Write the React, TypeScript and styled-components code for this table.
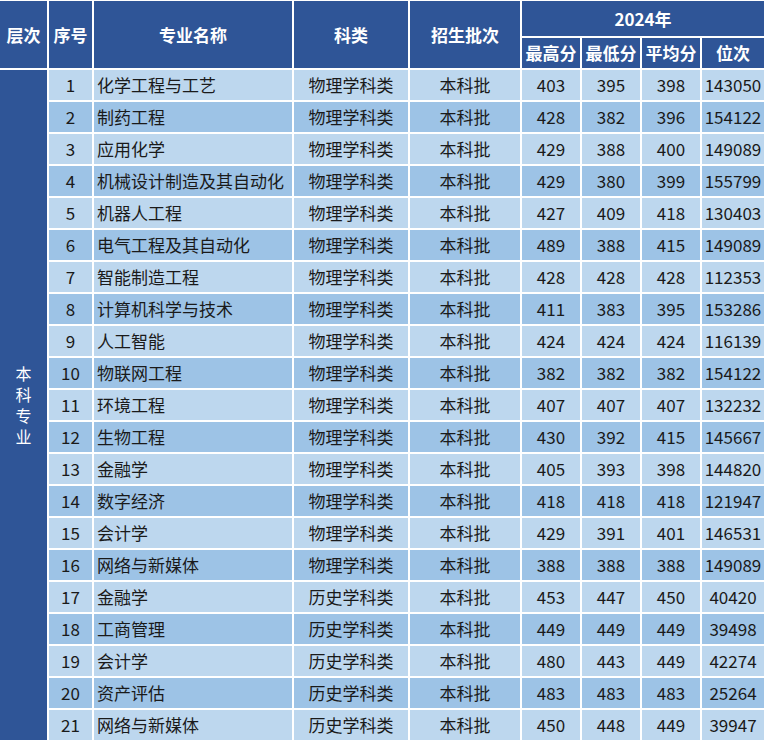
import React from "react";
import styled, { createGlobalStyle } from "styled-components";

const Global = createGlobalStyle`
  html, body { margin: 0; padding: 0; background: #ffffff; }
  body { font-family: "Noto Sans CJK SC", "Noto Sans", sans-serif; }
`;

const Table = styled.div`
  display: grid;
  grid-template-columns: 47px 43px 198px 114px 110px 58px 58px 58px 62px;
  grid-template-rows: 35px 30px repeat(21, 30px);
  gap: 2px;
  padding-top: 1px;
  width: 764px;
  background: #ffffff;
`;

const Head = styled.div<{ $rowSpan?: number; $colSpan?: number }>`
  grid-row: span ${(p) => p.$rowSpan ?? 1};
  grid-column: span ${(p) => p.$colSpan ?? 1};
  background: #2f5597;
  color: #ffffff;
  font-weight: 700;
  font-size: 17px;
  padding-bottom: 1px;
  display: flex;
  align-items: center;
  justify-content: center;
  white-space: nowrap;
`;

const LevelCell = styled.div`
  grid-column: 1;
  grid-row: 3 / span 21;
  background: #2f5597;
  color: #ffffff;
  display: flex;
  align-items: center;
  justify-content: center;
`;

const VerticalText = styled.div`
  width: 16px;
  font-size: 16px;
  line-height: 21px;
  text-align: center;
  word-break: break-all;
`;

const Cell = styled.div<{ $dark: boolean; $left?: boolean }>`
  background: ${(p) => (p.$dark ? "#9dc3e6" : "#bdd7ee")};
  color: #1a1a1a;
  font-size: 17px;
  padding-bottom: 1px;
  display: flex;
  align-items: center;
  justify-content: ${(p) => (p.$left ? "flex-start" : "center")};
  padding-left: ${(p) => (p.$left ? "3px" : "0")};
  white-space: nowrap;
`;

type Row = [string, string, string, string, string, string, string];

const rows: Row[] = [
  ["化学工程与工艺", "物理学科类", "本科批", "403", "395", "398", "143050"],
  ["制药工程", "物理学科类", "本科批", "428", "382", "396", "154122"],
  ["应用化学", "物理学科类", "本科批", "429", "388", "400", "149089"],
  ["机械设计制造及其自动化", "物理学科类", "本科批", "429", "380", "399", "155799"],
  ["机器人工程", "物理学科类", "本科批", "427", "409", "418", "130403"],
  ["电气工程及其自动化", "物理学科类", "本科批", "489", "388", "415", "149089"],
  ["智能制造工程", "物理学科类", "本科批", "428", "428", "428", "112353"],
  ["计算机科学与技术", "物理学科类", "本科批", "411", "383", "395", "153286"],
  ["人工智能", "物理学科类", "本科批", "424", "424", "424", "116139"],
  ["物联网工程", "物理学科类", "本科批", "382", "382", "382", "154122"],
  ["环境工程", "物理学科类", "本科批", "407", "407", "407", "132232"],
  ["生物工程", "物理学科类", "本科批", "430", "392", "415", "145667"],
  ["金融学", "物理学科类", "本科批", "405", "393", "398", "144820"],
  ["数字经济", "物理学科类", "本科批", "418", "418", "418", "121947"],
  ["会计学", "物理学科类", "本科批", "429", "391", "401", "146531"],
  ["网络与新媒体", "物理学科类", "本科批", "388", "388", "388", "149089"],
  ["金融学", "历史学科类", "本科批", "453", "447", "450", "40420"],
  ["工商管理", "历史学科类", "本科批", "449", "449", "449", "39498"],
  ["会计学", "历史学科类", "本科批", "480", "443", "449", "42274"],
  ["资产评估", "历史学科类", "本科批", "483", "483", "483", "25264"],
  ["网络与新媒体", "历史学科类", "本科批", "450", "448", "449", "39947"],
];

export default function App() {
  return (
    <>
      <Global />
      <Table>
        <Head $rowSpan={2}>层次</Head>
        <Head $rowSpan={2}>序号</Head>
        <Head $rowSpan={2}>专业名称</Head>
        <Head $rowSpan={2}>科类</Head>
        <Head $rowSpan={2}>招生批次</Head>
        <Head $colSpan={4}>2024年</Head>
        <Head>最高分</Head>
        <Head>最低分</Head>
        <Head>平均分</Head>
        <Head>位次</Head>
        <LevelCell>
          <VerticalText>本科专业</VerticalText>
        </LevelCell>
        {rows.map((r, i) => {
          const dark = i % 2 === 1;
          return (
            <React.Fragment key={i}>
              <Cell $dark={dark} style={{ gridColumn: 2 }}>{i + 1}</Cell>
              <Cell $dark={dark} $left>{r[0]}</Cell>
              <Cell $dark={dark}>{r[1]}</Cell>
              <Cell $dark={dark}>{r[2]}</Cell>
              <Cell $dark={dark}>{r[3]}</Cell>
              <Cell $dark={dark}>{r[4]}</Cell>
              <Cell $dark={dark}>{r[5]}</Cell>
              <Cell $dark={dark}>{r[6]}</Cell>
            </React.Fragment>
          );
        })}
      </Table>
    </>
  );
}
